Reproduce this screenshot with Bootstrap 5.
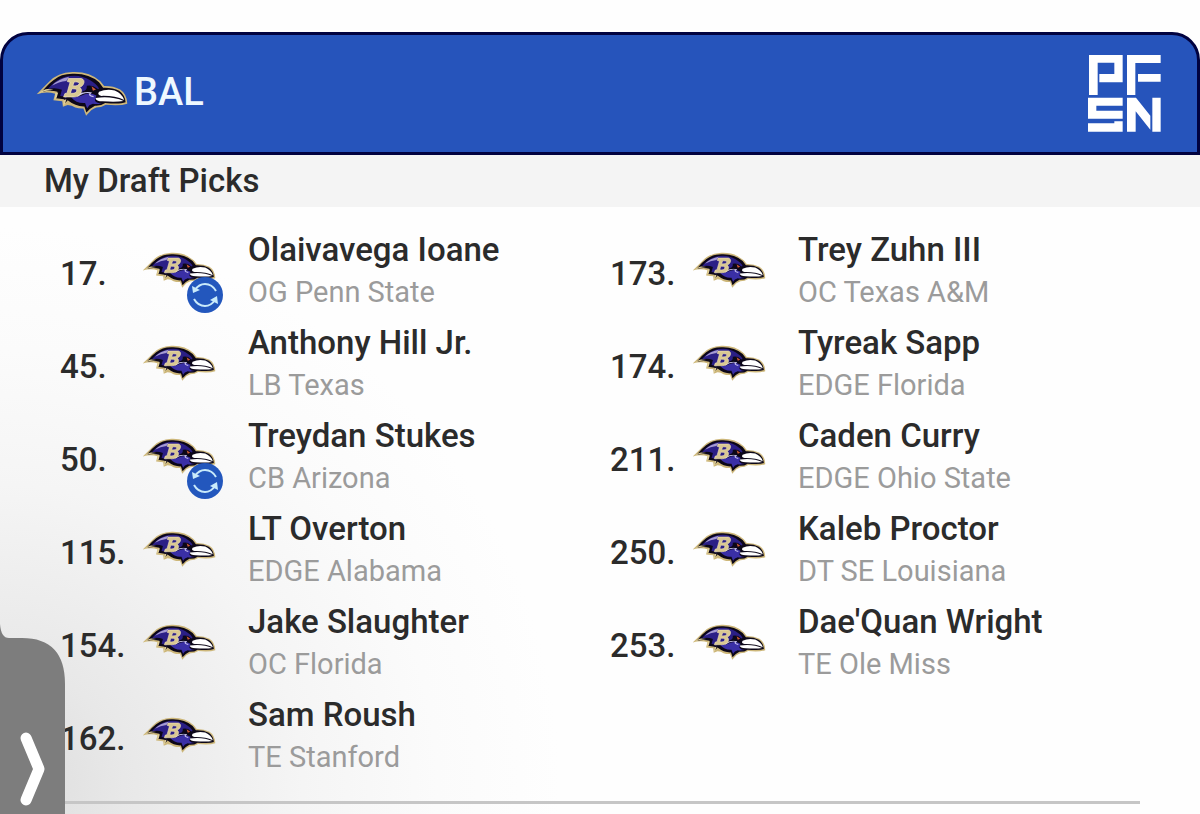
<!DOCTYPE html>
<html lang="en">
<head>
<meta charset="utf-8">
<meta name="viewport" content="width=device-width, initial-scale=1">
<title>BAL – My Draft Picks</title>
<link href="https://cdn.jsdelivr.net/npm/bootstrap@5.3.0/dist/css/bootstrap.min.css" rel="stylesheet">
<style>
  body { font-family: Roboto, sans-serif; color: #2b2b2b; background: #fefefe; }
  .team-bar { background: #2654bb; border: 3px solid #01023f; border-radius: 28px 28px 0 0; margin-top: 32px; padding: 20px 36px 20px 33px; }
  .team-name { font-size: 38px; line-height: 44px; font-weight: 500; color: #eef8ff; padding-bottom: 4px; margin-left: 6px; }
  .section-title { background: #f4f4f4; font-size: 33px; line-height: 52px; font-weight: 500; padding: 0 44px; }
  .picks-area { padding: 22px 60px 0; background: radial-gradient(ellipse 560px 560px at 0 580px, #dcdcdc 0%, #e8e8e8 22%, #f5f5f5 54%, #fbfbfb 78%, #fefefe 100%); }
  .picks { column-gap: 20px; padding-bottom: 14px; border-bottom: 3px solid #c6c6c6; }
  .pick { height: 84px; margin-bottom: 9px; }
  .pick-no { width: 82px; font-size: 33px; line-height: 40px; font-weight: 500; padding-top: 6px; }
  .pick-logo { width: 106px; padding-bottom: 3px; }
  .pick-name { font-size: 33px; line-height: 42px; font-weight: 500; }
  .pick-info { font-size: 29px; line-height: 42px; color: #9b9b9b; }
  .raven-lg { width: 92px; height: 45px; }
  .raven-sm { width: 74px; height: 36px; }
  .trade { left: 45px; top: 25px; width: 36px; height: 36px; }
  .drawer { left: 0; bottom: 0; width: 66px; height: 194px; z-index: 10; }
  .end-space { height: 11px; }
</style>
</head>
<body>
<svg width="0" height="0" class="position-absolute" aria-hidden="true">
  <symbol id="raven" viewBox="3 7 270 132">
    <path fill="#cdb77a" d="M5 75Q22 58 42 38Q66 12 110 10Q160 8 192 37L203 51Q228 50 250 61Q270 74 271 103Q250 110 208 106Q196 114 180 114Q172 117 165 122L150 138L142 117Q130 118 118 114L108 109L96 107L82 112L80 96L54 93L59 74Q34 66 5 75Z"/>
    <path fill="#0c0718" d="M19 69Q38 46 54 34Q76 15 110 15Q158 13 188 40L200 56Q228 55 247 65Q264 77 266 99Q250 105 206 101Q194 110 176 109Q162 116 151 129L145 111Q120 112 96 93L86 104L85 90L62 87L66 68Q44 62 19 69Z"/>
    <path fill="#e0cf98" d="M60 72L68 70L64 84L58 90ZM84 92L92 90L88 104L83 108ZM8 74Q26 60 38 60L54 62Q30 64 8 74Z"/>
    <path fill="#2b1f86" d="M38 60Q60 32 90 24Q130 14 162 34Q182 46 188 58L176 66Q160 60 142 66L126 78L96 80L90 88L86 82L74 80L79 62Q60 54 38 60Z"/>
    <path fill="#3a2fa6" d="M106 84Q130 84 146 75Q164 69 180 79L176 94Q182 102 196 102Q180 105 170 103Q158 106 153 116L147 101Q122 103 106 84Z"/>
    <path fill="#a59bd2" d="M50 50Q66 32 100 24L92 36Q70 38 50 50Z"/>
    <path fill="none" stroke="#c9c3ee" stroke-width="4" d="M124 81Q146 65 164 71Q154 79 172 82"/>
    <path fill="#0c0718" d="M152 50Q170 47 180 57L196 68L180 72Q158 66 138 70Q154 64 152 50Z"/>
    <path fill="#cf5a34" d="M166 52L179 61L170 65Z"/>
    <path fill="#fff" d="M188 68Q210 58 234 64Q256 73 262 92Q234 79 195 80Q181 77 188 68Z"/>
    <path fill="#fff" d="M178 86Q226 80 260 95Q238 99 199 96Q178 96 178 86Z"/>
    <path fill="#d9c892" stroke="#f7e9bd" stroke-width="2" fill-rule="evenodd" d="M98 29L136 29Q148 33 142 46Q138 53 131 55Q139 60 135 71Q129 83 114 83L84 83L88 73L94 72L103 40L95 38ZM115 39L111 50Q127 53 130 44Q130 38 115 39ZM108 59L104 72Q122 75 123 63Q121 58 108 59Z"/>
  </symbol>
  <symbol id="swap" viewBox="0 0 36 36">
    <circle cx="18" cy="18" r="18" fill="#2357bd"/>
    <g fill="none" stroke="#c9eafa" stroke-width="2">
      <path d="M8 13Q12 7 18 7Q25 7 29 14"/>
      <path d="M28 23Q24 29 18 29Q11 29 7 22"/>
    </g>
    <path fill="#c9eafa" d="M5 9L6 16L13 13ZM31 27L30 19L23 23Z"/>
  </symbol>
</svg>

<header class="team-bar d-flex align-items-center justify-content-between">
  <div class="d-flex align-items-center">
    <svg class="raven-lg" role="img" aria-label="Baltimore Ravens"><use href="#raven"/></svg>
    <h1 class="team-name mb-0">BAL</h1>
  </div>
  <svg width="73" height="77" viewBox="81 91 219 231" fill="#fff" role="img" aria-label="PFSN">
    <path d="M84 91H185V173H115V148H160V114H110V211H84Z"/>
    <path d="M198 91H299V115H223V211H198ZM231 148H299V171H231Z"/>
    <path d="M81 219H185V243H106V258H185V282H81ZM81 296H160V290H185V321H81Z"/>
    <path d="M198 219H225L268 273V315L224 260V321H198ZM274 219H299V321H274Z"/>
  </svg>
</header>

<main>
  <h2 class="section-title mb-0">My Draft Picks</h2>
  <div class="picks-area">
    <div class="picks d-flex">
      <ol class="list-unstyled mb-0 flex-fill w-50" data-picks="left"></ol>
      <ol class="list-unstyled mb-0 flex-fill w-50" data-picks="right"></ol>
    </div>
    <div class="end-space"></div>
  </div>
</main>

<button type="button" class="drawer position-fixed border-0 p-0 bg-transparent" aria-label="Open drawer">
  <svg class="d-block" width="66" height="194" viewBox="0 0 66 194" aria-hidden="true">
    <path fill="#7d7d7d" d="M0 4Q1 18 9 18H22Q65 18 65 64V194H0Z"/>
    <path fill="none" stroke="#fff" stroke-width="11" stroke-linecap="round" stroke-linejoin="round" d="M26 118L39 149L26 180"/>
  </svg>
</button>

<script src="https://cdn.jsdelivr.net/npm/bootstrap@5.3.0/dist/js/bootstrap.bundle.min.js"></script>
<script>
  const picks = {
    left: [
      [17, "Olaivavega Ioane", "OG Penn State", true],
      [45, "Anthony Hill Jr.", "LB Texas"],
      [50, "Treydan Stukes", "CB Arizona", true],
      [115, "LT Overton", "EDGE Alabama"],
      [154, "Jake Slaughter", "OC Florida"],
      [162, "Sam Roush", "TE Stanford"]
    ],
    right: [
      [173, "Trey Zuhn III", "OC Texas A&amp;M"],
      [174, "Tyreak Sapp", "EDGE Florida"],
      [211, "Caden Curry", "EDGE Ohio State"],
      [250, "Kaleb Proctor", "DT SE Louisiana"],
      [253, "Dae'Quan Wright", "TE Ole Miss"]
    ]
  };
  for (const side in picks) {
    document.querySelector(`[data-picks="${side}"]`).innerHTML = picks[side].map(([no, name, info, traded]) => `
      <li class="pick d-flex align-items-center">
        <div class="pick-no flex-shrink-0">${no}.</div>
        <div class="pick-logo flex-shrink-0 position-relative">
          <svg class="raven-sm d-block" role="img" aria-label="Baltimore Ravens"><use href="#raven"/></svg>
          ${traded ? '<svg class="trade position-absolute" role="img" aria-label="Acquired by trade"><use href="#swap"/></svg>' : ''}
        </div>
        <div class="text-nowrap">
          <div class="pick-name">${name}</div>
          <div class="pick-info">${info}</div>
        </div>
      </li>`).join("");
  }
</script>
</body>
</html>
